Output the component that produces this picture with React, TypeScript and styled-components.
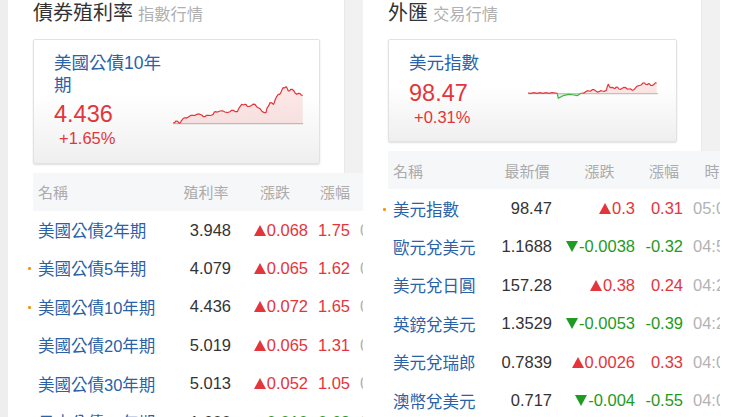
import React from "react";
import styled, { createGlobalStyle } from "styled-components";

const RED = "#e3353b";
const GREEN = "#1f9a22";
const BLUE = "#2962a8";

const GlobalStyle = createGlobalStyle`
  html, body { margin: 0; padding: 0; background: #ffffff; }
  body { font-family: "Liberation Sans", "Noto Sans CJK TC", sans-serif; }
  * { box-sizing: border-box; }
`;

const Page = styled.div`
  display: flex;
  width: 740px;
  height: 417px;
  overflow: hidden;
  border-left: 8px solid #eeeeee;
`;

const Column = styled.section<{ $w: number }>`
  width: ${(p) => p.$w}px;
  flex: none;
  overflow: hidden;
  display: flex;
  flex-direction: column;
`;

const Top = styled.div`
  display: flex;
`;

const Main = styled.div`
  flex: 1;
  min-width: 0;
  padding: 1px 24px 9px 25px;
`;

const Strip = styled.div`
  width: 19px;
  flex: none;
  background: #f1f1f1;
  box-shadow: inset 1px 0 0 #e9e9e9;
`;

const Heading = styled.h2`
  margin: 0;
  font-weight: normal;
  font-size: 20px;
  line-height: 24px;
  color: #333;
  white-space: nowrap;
`;

const Sub = styled.span`
  font-size: 16.3px;
  color: #b0b0b0;
  margin-left: 5px;
`;

const Card = styled.div`
  margin-top: 13px;
  display: flex;
  align-items: flex-start;
  border: 1px solid #e2e2e2;
  border-radius: 2px;
  background: linear-gradient(#ffffff 45%, #efefef);
  box-shadow: 0 1px 2px rgba(0, 0, 0, 0.13);
  padding: 13px 16px 14px 20px;
`;

const Info = styled.div`
  width: 118px;
  flex: none;
`;

const CardName = styled.div`
  font-size: 17.5px;
  line-height: 21.5px;
  color: ${BLUE};
`;

const CardPrice = styled.div`
  margin-top: 4px;
  font-size: 23.5px;
  line-height: 28px;
  color: ${RED};
`;

const CardChange = styled.div`
  margin-top: 1px;
  padding-left: 5px;
  font-size: 16.5px;
  line-height: 19.5px;
  color: ${RED};
`;

const Spark = styled.svg`
  flex: none;
  margin-top: 26px;
  display: block;
`;

const Table = styled.div`
  margin-left: 25px;
`;

const Row = styled.div<{ $cols: string; $head?: boolean }>`
  display: grid;
  grid-template-columns: ${(p) => p.$cols};
  height: 38.4px;
  align-items: center;
  width: max-content;
  background: ${(p) => (p.$head ? "#f6f7f9" : "transparent")};
  font-size: ${(p) => (p.$head ? "15px" : "16.5px")};
  color: ${(p) => (p.$head ? "#ababab" : "#333")};
  white-space: nowrap;
`;

const Cell = styled.div<{ $pl: number; $pr: number; $align: string; $color?: string }>`
  position: relative;
  display: flex;
  align-items: center;
  justify-content: ${(p) => p.$align};
  padding-left: ${(p) => p.$pl}px;
  padding-right: ${(p) => p.$pr}px;
  color: ${(p) => p.$color || "inherit"};
`;

const NameCell = styled(Cell)<{ $dot?: boolean }>`
  &::before {
    content: "";
    display: ${(p) => (p.$dot ? "block" : "none")};
    position: absolute;
    left: -5px;
    top: 50%;
    width: 3px;
    height: 3px;
    margin-top: -1px;
    border-radius: 1px;
    background: #f39a1e;
  }
`;

const Arrow = styled.span<{ $up: boolean }>`
  display: inline-block;
  width: 0;
  height: 0;
  margin-right: 1px;
  border-left: 6.5px solid transparent;
  border-right: 6.5px solid transparent;
  ${(p) =>
    p.$up
      ? `border-bottom: 11.5px solid ${RED};`
      : `border-top: 11.5px solid ${GREEN};`}
`;

type Col = { w: number; pl: number; pr: number };

type Quote = {
  name: string;
  price: string;
  change: string;
  pct: string;
  time: string;
  dot?: boolean;
};

type Pt = [number, number];

const linePath = (pts: Pt[]) =>
  pts.map((p, i) => `${i === 0 ? "M" : "L"}${p[0]},${p[1]}`).join(" ");

const jagged = (pts: Pt[]): Pt[] => {
  const out: Pt[] = [];
  pts.forEach((p, i) => {
    out.push(p);
    const n = pts[i + 1];
    if (n) {
      const s = i % 2 === 0 ? 0.7 : -0.7;
      out.push([(p[0] + n[0]) / 2, (p[1] + n[1]) / 2 + s]);
    }
  });
  return out;
};

const areaPath = (pts: Pt[], base: number) =>
  `${linePath(pts)} L${pts[pts.length - 1][0]},${base} L${pts[0][0]},${base} Z`;

const bondLine: Pt[] = jagged([
  [1.3, 43.7], [4, 42], [7.3, 44.3], [9.7, 41.3], [13, 38.7], [16.3, 38], [21.3, 36.3],
  [24.7, 35.3], [29.7, 36], [33, 37.7], [36.3, 36.3], [41.3, 35.3], [43, 32.7], [48, 32],
  [53, 33], [58, 32.7], [61.3, 31.3], [65.3, 32.7], [69.7, 25.3], [73, 25.3], [75.3, 27.3],
  [79.7, 26.3], [83, 25.3], [86.3, 28.7], [89.7, 32], [94, 33.7], [95.3, 28.7], [98, 23.7],
  [101.3, 25.3], [103, 21.3], [106.3, 15.3], [108.7, 14], [111.3, 8.7], [114, 7.7],
  [116.3, 12], [118.7, 10.3], [122, 12], [124.7, 15.3], [128, 14.7], [130.7, 16.3],
]);

const fxRed1: Pt[] = [
  [1, 14], [4, 14.3], [7, 13.7], [10, 14.3], [13, 13.7], [16, 14.3], [19, 13.7], [22, 14.3],
  [25, 13.7], [28.7, 14], [30.3, 14.3],
];
const fxGreen: Pt[] = [
  [30.3, 14.3], [31.3, 19.3], [33.7, 18], [37, 16.3], [42, 15.3], [47, 16], [50.3, 16.7],
  [53, 14.7], [55.3, 14],
];
const fxRed2: Pt[] = jagged([
  [55.3, 14], [58.7, 12.7], [62, 12], [65.3, 10.7], [68.7, 12], [72, 12.7], [75.3, 12],
  [79.3, 11.3], [81.3, 5.3], [83.7, 8.7], [87, 9.3], [89.3, 8], [92, 10], [95.3, 9.3],
  [98.7, 8.7], [102, 10], [105.3, 11.3], [108.7, 8.7], [112, 6.7], [116, 4], [118.7, 5.3],
  [121.3, 4.7], [123.7, 6.3], [127, 5.3], [129.7, 4],
]);

const PINK = "rgba(228, 60, 60, 0.13)";
const LIGHTGREEN = "rgba(40, 170, 40, 0.13)";

const BondSpark = () => (
  <Spark width={132} height={46} viewBox="0 0 132 46">
    <path d={areaPath(bondLine, 44.7)} fill={PINK} />
    <path d="M1,44.7 H131" stroke="#b9a9a9" strokeWidth={1} />
    <path d={linePath(bondLine)} fill="none" stroke={RED} strokeWidth={1.2} strokeLinejoin="round" />
  </Spark>
);

const FxSpark = () => (
  <Spark width={132} height={46} viewBox="0 0 132 46">
    <path d={areaPath(fxRed2, 14.7)} fill={PINK} />
    <path d={areaPath(fxGreen, 14.7)} fill={LIGHTGREEN} />
    <path d="M1,14.7 H131" stroke="#b5b5b5" strokeWidth={1} />
    <path d={linePath(fxRed1)} fill="none" stroke={RED} strokeWidth={1.2} />
    <path d={linePath(fxGreen)} fill="none" stroke="#3fb43f" strokeWidth={1.2} strokeLinejoin="round" />
    <path d={linePath(fxRed2)} fill="none" stroke={RED} strokeWidth={1.2} strokeLinejoin="round" />
  </Spark>
);

const QuoteTable = ({ cols, heads, rows }: { cols: Col[]; heads: string[]; rows: Quote[] }) => {
  const tpl = cols.map((c) => `${c.w}px`).join(" ");
  return (
    <Table>
      <Row $cols={tpl} $head>
        {heads.map((h, i) => (
          <Cell key={h} $pl={cols[i].pl} $pr={cols[i].pr} $align={i === 0 ? "flex-start" : "center"}>
            {h}
          </Cell>
        ))}
      </Row>
      {rows.map((r) => {
        const up = !r.change.startsWith("-");
        const color = up ? RED : GREEN;
        return (
          <Row $cols={tpl} key={r.name}>
            <NameCell $dot={r.dot} $pl={cols[0].pl} $pr={cols[0].pr} $align="flex-start" $color={BLUE}>
              {r.name}
            </NameCell>
            <Cell $pl={cols[1].pl} $pr={cols[1].pr} $align="flex-end">
              {r.price}
            </Cell>
            <Cell $pl={cols[2].pl} $pr={cols[2].pr} $align="flex-end" $color={color}>
              <Arrow $up={up} />
              {r.change}
            </Cell>
            <Cell $pl={cols[3].pl} $pr={cols[3].pr} $align="flex-end" $color={color}>
              {r.pct}
            </Cell>
            <Cell $pl={cols[4].pl} $pr={cols[4].pr} $align="flex-start" $color="#b3b3b3">
              {r.time}
            </Cell>
          </Row>
        );
      })}
    </Table>
  );
};

const bondCols: Col[] = [
  { w: 145, pl: 5, pr: 0 },
  { w: 56, pl: 3, pr: 3 },
  { w: 77, pl: 8, pr: 3 },
  { w: 42, pl: 9, pr: 3 },
  { w: 80, pl: 7, pr: 0 },
];

const fxCols: Col[] = [
  { w: 92, pl: 5, pr: 0 },
  { w: 75, pl: 22, pr: 3 },
  { w: 83, pl: 9, pr: 3 },
  { w: 48, pl: 7, pr: 3 },
  { w: 60, pl: 7, pr: 0 },
];

const bonds: Quote[] = [
  { name: "美國公債2年期", price: "3.948", change: "0.068", pct: "1.75", time: "05:00" },
  { name: "美國公債5年期", price: "4.079", change: "0.065", pct: "1.62", time: "05:00", dot: true },
  { name: "美國公債10年期", price: "4.436", change: "0.072", pct: "1.65", time: "05:00", dot: true },
  { name: "美國公債20年期", price: "5.019", change: "0.065", pct: "1.31", time: "05:00" },
  { name: "美國公債30年期", price: "5.013", change: "0.052", pct: "1.05", time: "05:00" },
  { name: "日本公債10年期", price: "1.600", change: "-0.010", pct: "-0.62", time: "04:00" },
];

const fx: Quote[] = [
  { name: "美元指數", price: "98.47", change: "0.3", pct: "0.31", time: "05:00", dot: true },
  { name: "歐元兌美元", price: "1.1688", change: "-0.0038", pct: "-0.32", time: "04:59" },
  { name: "美元兌日圓", price: "157.28", change: "0.38", pct: "0.24", time: "04:29" },
  { name: "英鎊兌美元", price: "1.3529", change: "-0.0053", pct: "-0.39", time: "04:29" },
  { name: "美元兌瑞郎", price: "0.7839", change: "0.0026", pct: "0.33", time: "04:05" },
  { name: "澳幣兌美元", price: "0.717", change: "-0.004", pct: "-0.55", time: "04:05" },
];

export default function App() {
  return (
    <>
      <GlobalStyle />
      <Page>
        <Column $w={355}>
          <Top>
            <Main>
              <Heading>
                債券殖利率<Sub>指數行情</Sub>
              </Heading>
              <Card>
                <Info>
                  <CardName>美國公債10年期</CardName>
                  <CardPrice>4.436</CardPrice>
                  <CardChange>+1.65%</CardChange>
                </Info>
                <BondSpark />
              </Card>
            </Main>
            <Strip />
          </Top>
          <QuoteTable cols={bondCols} heads={["名稱", "殖利率", "漲跌", "漲幅", "時間"]} rows={bonds} />
        </Column>
        <Column $w={357}>
          <Top>
            <Main>
              <Heading>
                外匯<Sub>交易行情</Sub>
              </Heading>
              <Card>
                <Info>
                  <CardName>美元指數</CardName>
                  <CardPrice>98.47</CardPrice>
                  <CardChange>+0.31%</CardChange>
                </Info>
                <FxSpark />
              </Card>
            </Main>
            <Strip />
          </Top>
          <QuoteTable cols={fxCols} heads={["名稱", "最新價", "漲跌", "漲幅", "時間"]} rows={fx} />
        </Column>
      </Page>
    </>
  );
}
